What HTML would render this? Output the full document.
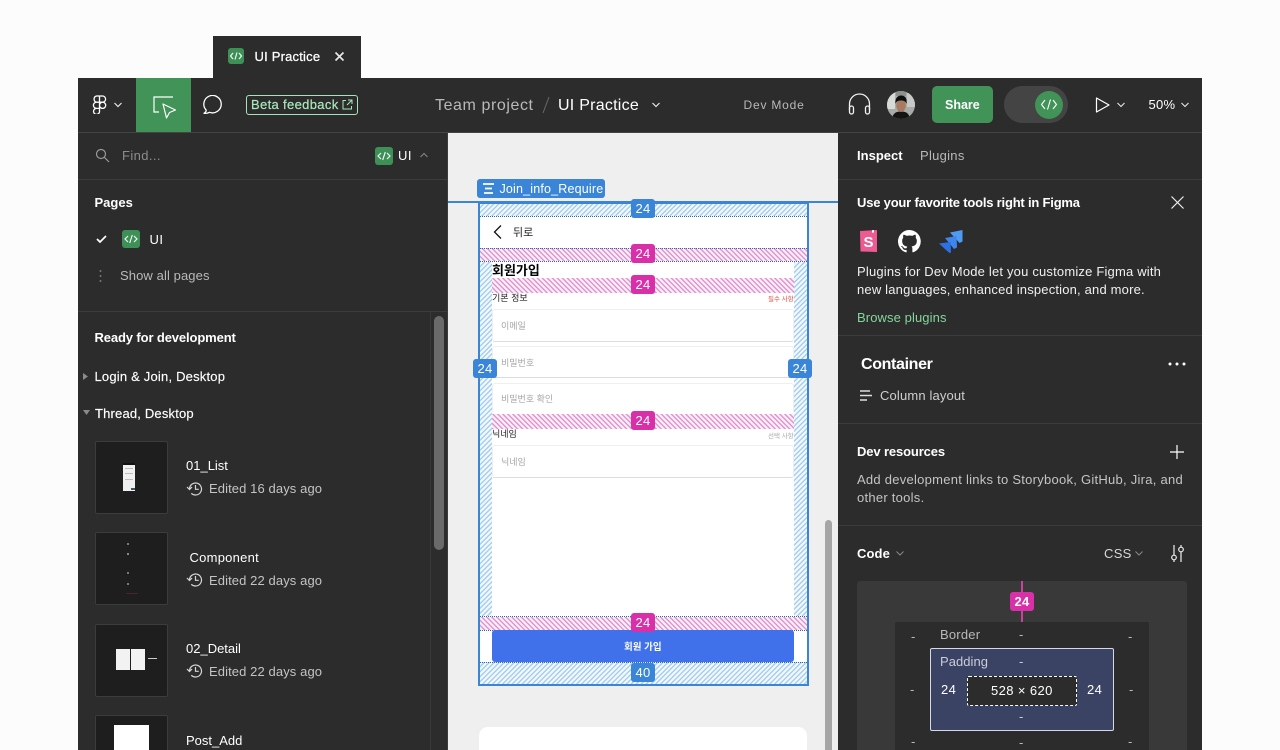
<!DOCTYPE html>
<html lang="ko"><head><meta charset="utf-8"><title>UI Practice</title>
<style>
*{box-sizing:border-box}
html,body{margin:0;padding:0;width:1280px;height:750px;overflow:hidden;background:#fcfcfc}
body{position:relative;font-family:"Liberation Sans","Noto Sans CJK KR",sans-serif;color:#fff;font-size:13px}
.a,.t,svg{position:absolute}
.t{white-space:nowrap;line-height:20px;letter-spacing:.2px}
.b{font-weight:700}
.g{color:#b9b9b9}
.l{background:#3c3c3c;height:1px}
.k{font-family:"Noto Sans CJK KR","Liberation Sans",sans-serif;letter-spacing:0}
.code{background:#3e9156;border-radius:3px}
.bb{background:#3a85d8;border-radius:3px;width:24px;height:19px;text-align:center;line-height:19px;font-size:13px;color:#fff;position:absolute;letter-spacing:.3px}
.pb{background:#d92fa8;border-radius:3px;width:24px;height:19px;text-align:center;line-height:19px;font-size:13px;color:#fff;position:absolute;letter-spacing:.3px}
.hb{position:absolute;background:repeating-linear-gradient(135deg,#a6cff0 0 1.4px,#f2f8fd 1.4px 3.500px)}
.hp{position:absolute;background:repeating-linear-gradient(45deg,#e394d0 0 1.4px,#fbeff8 1.4px 3.500px)}
.inp{position:absolute;left:492px;width:302px;background:#fff;border:1px solid #efefef;border-bottom-color:#dcdcdc;border-radius:3px}
.ph{position:absolute;left:501px;font-size:9px;color:#a5a5a5;line-height:12px;white-space:nowrap;font-family:"Noto Sans CJK KR",sans-serif}
.th{position:absolute;left:95px;width:73px;height:73px;background:#1e1e1e;border:1px solid #3c3c3c;border-radius:2px;overflow:hidden}
</style></head><body>

<!-- tab -->
<div class="a" style="left:213px;top:36px;width:148px;height:43px;background:#2c2c2c"></div>
<div class="a code" style="left:228px;top:48px;width:16px;height:16px"></div>
<svg style="left:228px;top:48px" width="16" height="16" fill="none" stroke="#fff" stroke-width="1.1"><path d="M5 5 2.500 8 5 11M11 5l2.500 3-2.500 3M9 4.500 7 11.500"/></svg>
<span class="t" style="left:254.500px;top:46.500px;font-size:13px;letter-spacing:.2px;-webkit-text-stroke:.25px #fff">UI Practice</span>
<svg style="left:333px;top:50px" width="13" height="13" fill="none" stroke="#e8e8e8" stroke-width="1.700"><path d="M2.500 2.500 10.500 10.500M10.500 2.500 2.500 10.500"/></svg>

<!-- window -->
<div class="a" style="left:78px;top:78px;width:1124px;height:672px;background:#2c2c2c"></div>
<div class="a" style="left:78px;top:132px;width:1124px;height:1px;background:#444"></div>

<!-- toolbar left -->
<svg style="left:92px;top:95px" width="15" height="19" fill="none" stroke="#fff" stroke-width="1.300"><path d="M7.500 1H4.500a3.200 3.200 0 0 0 0 6.200h3zM7.500 1h3a3.100 3.100 0 0 1 0 6.200h-3zM7.500 7.200H4.500a3.100 3.100 0 0 0 0 6.200h3zM7.500 10.300a3.100 3.100 0 1 0 6.200 0 3.100 3.100 0 0 0-6.200 0zM4.500 13.400h3v2.500a3 3 0 1 1-3-2.500z"/></svg>
<svg style="left:113px;top:101px" width="10" height="8" fill="none" stroke="#e8e8e8" stroke-width="1.200"><path d="M1.500 2 5 5.500 8.500 2"/></svg>
<div class="a" style="left:136px;top:78px;width:55px;height:54px;background:#429358"></div>
<svg style="left:152px;top:95px" width="26" height="25" fill="none" stroke="#fff" stroke-width="1.200"><path d="M21 2H2v15h5"/><path d="M11 9 23.500 15 17.500 17.500 14.500 23z" stroke-linejoin="round"/></svg>
<svg style="left:202px;top:95px" width="22" height="20" fill="none" stroke="#fff" stroke-width="1.300"><path d="M2 18.300c1.500-1 2.300-2 2.200-3.200A8.700 8.700 0 1 1 7.500 17.300c-1.500.9-3.500 1.200-5.500 1z" stroke-linejoin="round"/></svg>
<div class="a" style="left:246px;top:95px;width:112px;height:20px;border:1px solid #a6e4b8;border-radius:3px"></div>
<span class="t" style="left:251px;top:94.500px;color:#a9e8bb;letter-spacing:.34px;-webkit-text-stroke:.2px #a9e8bb">Beta feedback</span>
<svg style="left:342px;top:99px" width="11" height="11" fill="none" stroke="#a9e8bb" stroke-width="1"><path d="M4 1.500H1v8.500h8.500V7M6 1h4v4M10 1 5 6"/></svg>

<span class="t g" style="left:435px;top:95.500px;font-size:16px;letter-spacing:.58px">Team project</span>
<svg style="left:541px;top:95px" width="10" height="20" fill="none" stroke="#6b6b6b" stroke-width="1"><path d="M8 2 2 18"/></svg>
<span class="t" style="left:558px;top:95.500px;font-size:16px;letter-spacing:.25px">UI Practice</span>
<svg style="left:651px;top:101px" width="10" height="8" fill="none" stroke="#e8e8e8" stroke-width="1.200"><path d="M1.500 2 5 5.500 8.500 2"/></svg>
<span class="t g" style="left:743.500px;top:95px;font-size:12px;letter-spacing:.8px">Dev Mode</span>

<!-- toolbar right -->
<svg style="left:848px;top:93px" width="23" height="23" fill="none" stroke="#f2f2f2" stroke-width="1.300"><path d="M1.500 17V11a10 10 0 0 1 20 0v6"/><rect x="1.500" y="13" width="4" height="8" rx="2"/><rect x="17.500" y="13" width="4" height="8" rx="2"/></svg>
<svg style="left:887px;top:91px" width="28" height="28"><defs><clipPath id="c"><circle cx="14" cy="14" r="14"/></clipPath></defs><g clip-path="url(#c)"><rect width="28" height="28" fill="#a8aba8"/><rect x="0" y="0" width="8" height="18" fill="#d8dad8"/><rect x="20" y="2" width="8" height="14" fill="#c6c9c6"/><rect x="9" y="0" width="10" height="5" fill="#8d918d"/><path d="M5 28c1-6 4-7.500 9-7.500s8 1.500 9 7.500z" fill="#141414"/><ellipse cx="14" cy="14.500" rx="4.800" ry="6.500" fill="#a97a62"/><path d="M8.500 13c-.8-6 2.500-8.500 5.500-8.500s6.500 1.500 5.500 8.500c-.8-3-3-3.500-5.500-3.500S9.300 10 8.500 13z" fill="#0e0e0e"/></g></svg>
<div class="a" style="left:932px;top:86px;width:61px;height:37px;background:#429358;border-radius:5px"></div>
<span class="t b" style="left:945px;top:94.500px;font-size:12.500px;letter-spacing:0">Share</span>
<div class="a" style="left:1004px;top:86px;width:64px;height:37px;background:#444;border-radius:19px"></div>
<div class="a" style="left:1035px;top:91px;width:28px;height:28px;background:#429358;border-radius:50%"></div>
<svg style="left:1040px;top:97px" width="18" height="15" fill="none" stroke="#fff" stroke-width="1.100"><path d="M5 3 1.500 7.500 5 12M13 3l3.500 4.500L13 12M10.500 2.500l-3 10"/></svg>
<svg style="left:1095px;top:96px" width="16" height="18" fill="none" stroke="#fff" stroke-width="1.200"><path d="M1.500 2 14 9 1.500 16z" stroke-linejoin="round"/></svg>
<svg style="left:1116px;top:101px" width="10" height="8" fill="none" stroke="#e8e8e8" stroke-width="1.100"><path d="M1.500 2 5 5.500 8.500 2"/></svg>
<span class="t" style="left:1148.500px;top:95px;font-size:13px;letter-spacing:.3px">50%</span>
<svg style="left:1180px;top:101px" width="10" height="8" fill="none" stroke="#e8e8e8" stroke-width="1.100"><path d="M1.500 2 5 5.500 8.500 2"/></svg>

<!-- left panel -->
<svg style="left:95px;top:148px" width="15" height="15" fill="none" stroke="#999" stroke-width="1.200"><circle cx="6" cy="6" r="4.500"/><path d="M9.500 9.500 14 14"/></svg>
<span class="t" style="left:122px;top:145.500px;color:#8c8c8c;letter-spacing:.4px">Find...</span>
<div class="a code" style="left:375px;top:147px;width:18px;height:18px"></div>
<svg style="left:375px;top:147px" width="18" height="18" fill="none" stroke="#fff" stroke-width="1.100"><path d="M6 6 3 9l3 3M12 6l3 3-3 3M10.300 5 7.700 13"/></svg>
<span class="t" style="left:398px;top:145.500px;letter-spacing:.5px">UI</span>
<svg style="left:419px;top:151px" width="10" height="8" fill="none" stroke="#888" stroke-width="1"><path d="M1.500 6 5 2.500 8.500 6"/></svg>
<div class="a l" style="left:78px;top:179px;width:369px"></div>

<span class="t b" style="left:94.500px;top:192.500px;letter-spacing:0">Pages</span>
<svg style="left:95px;top:233px" width="13" height="12" fill="none" stroke="#fff" stroke-width="1.700"><path d="M2 6 5 9 11 3"/></svg>
<div class="a code" style="left:122px;top:230px;width:18px;height:18px"></div>
<svg style="left:122px;top:230px" width="18" height="18" fill="none" stroke="#fff" stroke-width="1.100"><path d="M6 6 3 9l3 3M12 6l3 3-3 3M10.300 5 7.700 13"/></svg>
<span class="t" style="left:149.500px;top:229.500px;letter-spacing:.5px">UI</span>
<svg style="left:98px;top:269px" width="5" height="14" fill="#777"><circle cx="2.500" cy="2" r="1"/><circle cx="2.500" cy="7" r="1"/><circle cx="2.500" cy="12" r="1"/></svg>
<span class="t g" style="left:120px;top:266px;letter-spacing:.1px">Show all pages</span>
<div class="a l" style="left:78px;top:311px;width:369px"></div>
<div class="a" style="left:430px;top:312px;width:1px;height:438px;background:#383838"></div>
<div class="a" style="left:434px;top:316px;width:10px;height:234px;background:#6a6a6a;border-radius:5px"></div>

<span class="t b" style="left:94.500px;top:328px;letter-spacing:-.12px">Ready for development</span>
<svg style="left:82px;top:372px" width="7" height="9" fill="#8a8a8a"><path d="M1 1 6 4.500 1 8z"/></svg>
<span class="t" style="left:94.500px;top:367px;letter-spacing:.2px;-webkit-text-stroke:.15px #fff">Login &amp; Join, Desktop</span>
<svg style="left:82px;top:409px" width="9" height="7" fill="#8a8a8a"><path d="M1 1h7L4.500 6z"/></svg>
<span class="t" style="left:95px;top:403.500px;letter-spacing:.18px;-webkit-text-stroke:.15px #fff">Thread, Desktop</span>

<div class="th" style="top:441px"><div class="a" style="left:27px;top:21px;width:12px;height:28px;background:#f0f0f0"></div><div class="a" style="left:27px;top:21px;width:12px;height:2px;background:#111"></div><div class="a" style="left:29px;top:26px;width:8px;height:1px;background:#bbb"></div><div class="a" style="left:29px;top:31px;width:8px;height:1px;background:#bbb"></div><div class="a" style="left:29px;top:37px;width:8px;height:1px;background:#bbb"></div><div class="a" style="left:35px;top:46px;width:4px;height:2px;background:#456"></div></div>
<span class="t" style="left:186px;top:456px;letter-spacing:0">01_List</span>
<svg style="left:186px;top:481px" width="18" height="16" fill="none" stroke="#d6d6d6" stroke-width="1.200"><path d="M3.500 8a6 6 0 1 1 1.800 4.300M1 6l2.500 2.500L6 6M9.500 4v4.300h3.300"/></svg>
<span class="t" style="left:209px;top:479px;color:#c4c4c4;letter-spacing:.1px">Edited 16 days ago</span>

<div class="th" style="top:532px"><div class="a" style="left:31px;top:10px;width:2px;height:2px;background:#777"></div><div class="a" style="left:31px;top:20px;width:2px;height:2px;background:#888"></div><div class="a" style="left:31px;top:39px;width:2px;height:2px;background:#777"></div><div class="a" style="left:31px;top:50px;width:2px;height:2px;background:#777"></div><div class="a" style="left:30px;top:60px;width:12px;height:1px;background:#4c2526"></div></div>
<span class="t" style="left:189.500px;top:547.500px;letter-spacing:.25px">Component</span>
<svg style="left:186px;top:572px" width="18" height="16" fill="none" stroke="#d6d6d6" stroke-width="1.200"><path d="M3.500 8a6 6 0 1 1 1.800 4.300M1 6l2.500 2.500L6 6M9.500 4v4.300h3.300"/></svg>
<span class="t" style="left:209px;top:570.500px;color:#c4c4c4;letter-spacing:.1px">Edited 22 days ago</span>

<div class="th" style="top:623.500px"><div class="a" style="left:20px;top:24px;width:14px;height:21px;background:#f2f2f2"></div><div class="a" style="left:35px;top:24px;width:14px;height:21px;background:#f2f2f2"></div><div class="a" style="left:52px;top:33px;width:9px;height:1px;background:#ccc"></div></div>
<span class="t" style="left:186px;top:639px;letter-spacing:0">02_Detail</span>
<svg style="left:186px;top:663px" width="18" height="16" fill="none" stroke="#d6d6d6" stroke-width="1.200"><path d="M3.500 8a6 6 0 1 1 1.800 4.300M1 6l2.500 2.500L6 6M9.500 4v4.300h3.300"/></svg>
<span class="t" style="left:209px;top:662px;color:#c4c4c4;letter-spacing:.1px">Edited 22 days ago</span>

<div class="th" style="top:715px;height:40px"><div class="a" style="left:18px;top:9px;width:35px;height:40px;background:#fff"></div></div>
<span class="t" style="left:186px;top:730.500px;letter-spacing:0">Post_Add</span>

<!-- canvas -->
<div class="a" style="left:448px;top:133px;width:390px;height:617px;background:#efefef"></div>
<div class="a" style="left:447px;top:133px;width:1px;height:617px;background:#3c3c3c"></div>
<div class="a" style="left:825px;top:520px;width:7px;height:230px;background:#a6a6a6;border-radius:3.500px 3.500px 0 0"></div>
<div class="a" style="left:479px;top:727px;width:328px;height:30px;background:#fff;border-radius:9px"></div>

<!-- frame -->
<div class="a" style="left:478px;top:202px;width:331px;height:484px;background:#fff"></div>
<div class="hb" style="left:479px;top:203px;width:328px;height:13px"></div>
<div class="hb" style="left:479px;top:262px;width:13px;height:354px"></div>
<div class="hb" style="left:794px;top:262px;width:13px;height:354px"></div>
<div class="hb" style="left:479px;top:662px;width:328px;height:23px"></div>
<div class="hp" style="left:479px;top:248px;width:328px;height:13px"></div>
<div class="hp" style="left:492px;top:278px;width:302px;height:15px"></div>
<div class="hp" style="left:492px;top:414px;width:302px;height:15px"></div>
<div class="hp" style="left:479px;top:617px;width:328px;height:13px"></div>
<div class="a" style="left:479px;top:216px;width:328px;border-top:1px dotted #2f66b5"></div>
<div class="a" style="left:479px;top:248px;width:328px;border-top:1px dotted #2f66b5"></div>
<div class="a" style="left:479px;top:261px;width:328px;border-top:1px dotted #2f66b5"></div>
<div class="a" style="left:479px;top:616px;width:328px;border-top:1px dotted #2f66b5"></div>
<div class="a" style="left:479px;top:630px;width:328px;border-top:1px dotted #2f66b5"></div>
<div class="a" style="left:479px;top:662px;width:328px;border-top:1px dotted #2f66b5"></div>

<svg style="left:492px;top:224px" width="12" height="16" fill="none" stroke="#111" stroke-width="1.300"><path d="M9 1.500 2.500 8 9 14.500"/></svg>
<span class="a k" style="left:513px;top:224.500px;font-size:11px;line-height:15px;color:#222">뒤로</span>
<span class="a k" style="left:492px;top:260px;font-size:13px;line-height:19px;font-weight:700;color:#000;white-space:nowrap">회원가입</span>
<span class="a k" style="left:492px;top:291px;font-size:9px;line-height:13px;color:#222;white-space:nowrap">기본 정보</span>
<span class="a k" style="left:768px;top:293px;font-size:6.500px;line-height:10px;color:#e0524a;white-space:nowrap">필수 사항</span>
<div class="inp" style="top:309px;height:33px"></div><span class="ph" style="top:320px">이메일</span>
<div class="inp" style="top:346px;height:32px"></div><span class="ph" style="top:357px">비밀번호</span>
<div class="inp" style="top:383px;height:31px;border-bottom:0"></div><span class="ph" style="top:393px">비밀번호 확인</span>
<span class="a k" style="left:492px;top:427px;font-size:9px;line-height:13px;color:#222">닉네임</span>
<span class="a k" style="left:768px;top:430px;font-size:6.500px;line-height:10px;color:#aaa;white-space:nowrap">선택 사항</span>
<div class="inp" style="top:445px;height:33px"></div><span class="ph" style="top:456px">닉네임</span>
<div class="a" style="left:492px;top:630px;width:302px;height:32px;background:#4070ea;border-radius:3px"></div>
<span class="a k" style="left:624px;top:639.500px;font-size:9.500px;line-height:13px;font-weight:700;color:#fff;white-space:nowrap">회원 가입</span>

<div class="a" style="left:478px;top:202px;width:331px;height:484px;border:2px solid #3a85d8"></div>
<div class="a" style="left:448px;top:201px;width:390px;height:2px;background:#3a85d8"></div>
<div class="a" style="left:477px;top:179px;width:128px;height:19px;background:#3a85d8;border-radius:3px"></div>
<svg style="left:482px;top:182px" width="13" height="13" fill="none" stroke="#fff" stroke-width="1.800"><path d="M1 2h11M3 6.500h7M2 11h9"/></svg>
<span class="t" style="left:499.500px;top:178.500px;font-size:12.500px;letter-spacing:.18px;color:#fff">Join_info_Require</span>

<div class="bb" style="left:631px;top:199px">24</div>
<div class="pb" style="left:631px;top:244px">24</div>
<div class="pb" style="left:631px;top:275px">24</div>
<div class="bb" style="left:473px;top:359px">24</div>
<div class="bb" style="left:788px;top:359px">24</div>
<div class="pb" style="left:631px;top:411px">24</div>
<div class="pb" style="left:631px;top:612.500px">24</div>
<div class="bb" style="left:631px;top:663px">40</div>

<!-- right panel -->
<div class="a" style="left:838px;top:133px;width:364px;height:617px;background:#2c2c2c"></div>
<span class="t b" style="left:857px;top:146px;letter-spacing:.02px">Inspect</span>
<span class="t g" style="left:920px;top:146px;letter-spacing:.28px">Plugins</span>
<div class="a l" style="left:838px;top:179px;width:364px"></div>
<span class="t b" style="left:857px;top:192.500px;letter-spacing:-.2px">Use your favorite tools right in Figma</span>
<svg style="left:1170px;top:195px" width="15" height="15" fill="none" stroke="#eee" stroke-width="1.200"><path d="M1.500 1.500l12 12M13.500 1.500l-12 12"/></svg>

<svg style="left:859px;top:229px" width="20" height="24"><path d="M1 2 18 1v22L1.500 22.500z" fill="#ee5a92"/><path d="M15 1v3l-1-.7-1 .7V1.200z" fill="#fff"/><text x="9.500" y="18" text-anchor="middle" font-family="Liberation Sans" font-weight="700" font-size="15" fill="#fff">S</text></svg>
<svg style="left:898px;top:230px" width="23" height="23" viewBox="0 0 16 16" fill="#fff"><path d="M8 0a8 8 0 0 0-2.500 15.600c.4.100.5-.2.500-.4v-1.400c-2.200.5-2.700-1-2.700-1-.4-.9-.9-1.200-.9-1.200-.7-.5.100-.5.100-.5.800.1 1.200.8 1.200.8.700 1.200 1.900.9 2.300.7.100-.5.300-.9.500-1.100-1.800-.2-3.600-.9-3.600-4 0-.9.300-1.600.8-2.100-.1-.2-.4-1 .1-2.100 0 0 .7-.2 2.200.8a7.500 7.500 0 0 1 4 0c1.500-1 2.200-.8 2.200-.8.400 1.100.2 1.900.1 2.100.5.600.8 1.300.8 2.100 0 3.100-1.900 3.700-3.700 3.900.3.300.6.800.6 1.500v2.200c0 .2.100.5.600.4A8 8 0 0 0 8 0z"/></svg>
<svg style="left:939px;top:229px" width="25" height="25"><path d="M11 3.500 23.500 1v11.500l-3 1.500-4-4.500z" fill="#4f9bf4"/><path d="M6 9l11.500-2 .5 11.500-3 1.500-4-5z" fill="#3d86ee"/><path d="M0 14.500 11.500 13l.5 10.500-1.500.5-4-3.500z" fill="#2c70e4"/></svg>

<span class="t" style="left:857px;top:261.500px;letter-spacing:.19px;color:#f0f0f0">Plugins for Dev Mode let you customize Figma with</span>
<span class="t" style="left:857px;top:279.500px;letter-spacing:.18px;color:#f0f0f0">new languages, enhanced inspection, and more.</span>
<span class="t" style="left:857px;top:307.500px;letter-spacing:.1px;color:#85d59c">Browse plugins</span>
<div class="a l" style="left:838px;top:335px;width:364px"></div>

<span class="t b" style="left:861px;top:354.500px;font-size:16px;letter-spacing:-.35px">Container</span>
<svg style="left:1167px;top:361px" width="20" height="6" fill="#fff"><circle cx="3" cy="3" r="1.500"/><circle cx="10" cy="3" r="1.500"/><circle cx="17" cy="3" r="1.500"/></svg>
<svg style="left:860px;top:389px" width="13" height="14" fill="none" stroke="#ddd" stroke-width="1.500"><path d="M0 2h10M0 6.500h12M0 11h7"/></svg>
<span class="t" style="left:880px;top:386px;color:#cfcfcf;letter-spacing:.15px">Column layout</span>
<div class="a l" style="left:838px;top:423px;width:364px"></div>

<span class="t b" style="left:857px;top:442px;letter-spacing:-.13px">Dev resources</span>
<svg style="left:1170px;top:445px" width="14" height="14" fill="none" stroke="#fff" stroke-width="1.200"><path d="M7 0v14M0 7h14"/></svg>
<span class="t" style="left:857px;top:469.500px;color:#c4c4c4;letter-spacing:.26px">Add development links to Storybook, GitHub, Jira, and</span>
<span class="t" style="left:857px;top:487.500px;color:#c4c4c4;letter-spacing:.26px">other tools.</span>
<div class="a l" style="left:838px;top:525px;width:364px"></div>

<span class="t b" style="left:857px;top:543.500px;letter-spacing:.1px">Code</span>
<svg style="left:895px;top:550px" width="10" height="7" fill="none" stroke="#888" stroke-width="1"><path d="M1.500 1.500 5 5 8.500 1.500"/></svg>
<span class="t" style="left:1104px;top:543.500px;color:#d8d8d8;letter-spacing:.3px">CSS</span>
<svg style="left:1134px;top:550px" width="10" height="7" fill="none" stroke="#888" stroke-width="1"><path d="M1.500 1.500 5 5 8.500 1.500"/></svg>
<svg style="left:1169px;top:544px" width="17" height="19" fill="none" stroke="#eee" stroke-width="1.200"><path d="M5 1v10M5 16v2M12 1v2M12 8v10"/><circle cx="5" cy="13.500" r="2.300"/><circle cx="12" cy="5.500" r="2.300"/></svg>

<div class="a" style="left:857px;top:581px;width:330px;height:169px;background:#393939;border-radius:3px 3px 0 0"></div>
<div class="a" style="left:1021px;top:581px;width:1.500px;height:41px;background:#c8439e"></div>
<div class="pb" style="left:1010px;top:592px;height:19px;width:24px;font-weight:700;font-size:13px">24</div>
<div class="a" style="left:895px;top:622px;width:254px;height:128px;background:#2c2c2c;border-radius:2px 2px 0 0"></div>
<span class="t g" style="left:940px;top:625px;letter-spacing:.2px">Border</span>
<span class="t g" style="left:1019px;top:625px">-</span>
<span class="t g" style="left:911px;top:627px">-</span>
<span class="t g" style="left:1128px;top:627px">-</span>
<span class="t g" style="left:910px;top:680px">-</span>
<span class="t g" style="left:1129px;top:680px">-</span>
<span class="t g" style="left:911px;top:732px">-</span>
<span class="t g" style="left:1019px;top:733px">-</span>
<span class="t g" style="left:1128px;top:732px">-</span>
<div class="a" style="left:930px;top:648px;width:184px;height:83px;background:#3b4365;border:1.500px solid #d5d9e3;border-radius:2px"></div>
<span class="t" style="left:940px;top:652px;color:#c9cdd9;letter-spacing:.05px">Padding</span>
<span class="t" style="left:1019px;top:652px;color:#c9cdd9">-</span>
<span class="t" style="left:1019px;top:707px;color:#c9cdd9">-</span>
<span class="t" style="left:941px;top:680px;letter-spacing:.4px">24</span>
<span class="t" style="left:1087px;top:680px;letter-spacing:.4px">24</span>
<div class="a" style="left:967px;top:676px;width:110px;height:30px;background:#2c2c2c;border:1px dashed #fff;border-radius:2px"></div>
<span class="t" style="left:991px;top:681px;letter-spacing:.4px">528 × 620</span>

</body></html>
